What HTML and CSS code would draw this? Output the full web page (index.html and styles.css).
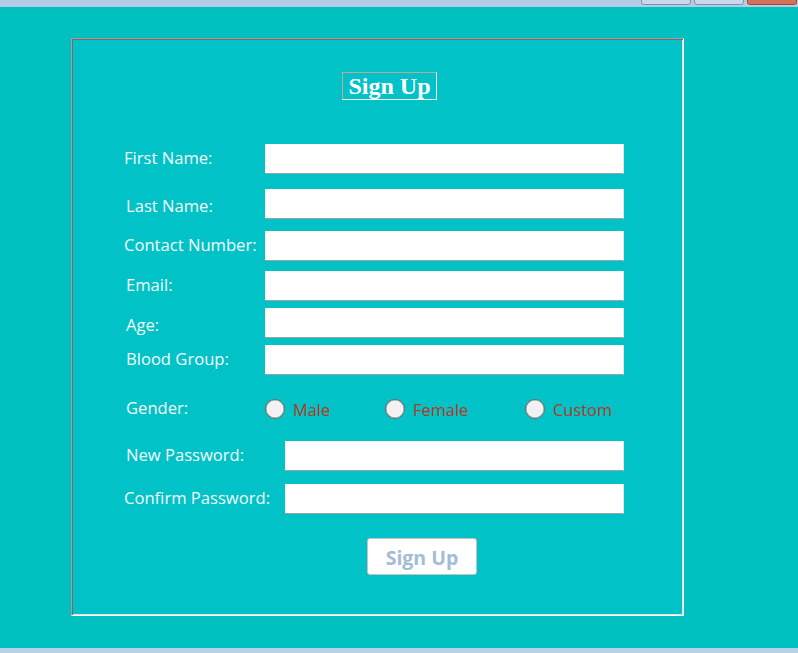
FILE: index.html
```html
<!DOCTYPE html>
<html>
<head>
<meta charset="utf-8">
<title>Sign Up</title>
<link rel="stylesheet" href="styles.css">
</head>
<body>
<div class="titlebar">
  <div class="tb-btn"></div>
  <div class="tb-btn"></div>
  <div class="tb-btn close"></div>
</div>
<main class="client">
  <section class="panel">
    <div class="title">Sign Up</div>
    <div class="row r1"><label class="lbl">First Name:</label><div class="field"></div></div>
    <div class="row r2"><label class="lbl shift l2">Last Name:</label><div class="field"></div></div>
    <div class="row r3"><label class="lbl">Contact Number:</label><div class="field"></div></div>
    <div class="row r4"><label class="lbl l2">Email:</label><div class="field"></div></div>
    <div class="row r5"><label class="lbl shift l2">Age:</label><div class="field"></div></div>
    <div class="row r6"><label class="lbl l2">Blood Group:</label><div class="field"></div></div>
    <div class="row r7">
      <label class="lbl l2">Gender:</label>
      <div class="radios">
        <div class="opt o1"><span class="dot"></span><span class="otext">Male</span></div>
        <div class="opt o2"><span class="dot"></span><span class="otext">Female</span></div>
        <div class="opt"><span class="dot"></span><span class="otext">Custom</span></div>
      </div>
    </div>
    <div class="row r8"><label class="lbl wide l2">New Password:</label><div class="field short"></div></div>
    <div class="row r9"><label class="lbl wide">Confirm Password:</label><div class="field short"></div></div>
    <div class="btnrow"><button class="btn">Sign Up</button></div>
  </section>
</main>
<div class="statusbar"></div>
</body>
</html>
```
FILE: styles.css
```css
html, body {
  margin: 0;
  padding: 0;
}
body {
  width: 798px;
  height: 653px;
  overflow: hidden;
  background: #00c1c0;
  font-family: "Open Sans", "Noto Sans", sans-serif;
}
.titlebar {
  height: 7px;
  background: #b3cbe4;
  display: flex;
  justify-content: flex-end;
  gap: 3px;
  padding-right: 1px;
}
.tb-btn {
  width: 48px;
  height: 4px;
  margin-top: -1px;
  border: 1px solid #8093ad;
  border-radius: 0 0 3px 3px;
  background: #c9d9ec;
}
.tb-btn.close {
  background: #d9705c;
  border-color: #9a4a3c;
}
.client {
  height: 641px;
  background: #00c1c0;
  padding: 31px 0 0 71px;
  box-sizing: border-box;
}
.statusbar {
  height: 5px;
  background: #b8d0e8;
}
.panel {
  width: 613px;
  height: 578px;
  box-sizing: border-box;
  background: #00c2c7;
  border-top: 1px solid #a0a0a0;
  border-left: 1px solid #a0a0a0;
  border-right: 1px solid #ffffff;
  border-bottom: 1px solid #ffffff;
  box-shadow: inset 1px 1px 0 #6e6e6e, inset -1px -1px 0 #e3e3e3;
  padding-top: 33px;
  display: flex;
  flex-direction: column;
}
.title {
  margin-left: 270px;
  width: 95px;
  height: 28px;
  box-sizing: border-box;
  border-top: 1px solid #c9a0a0;
  border-left: 1px solid #c9a0a0;
  border-right: 1px solid #ffffff;
  border-bottom: 1px solid #ffffff;
  color: #ffffff;
  font-family: "Liberation Serif", "Times New Roman", serif;
  font-weight: bold;
  font-size: 24px;
  line-height: 26px;
  text-align: center;
}
.row {
  display: flex;
  align-items: center;
  height: 30px;
  padding-left: 52px;
}
.r1 { margin-top: 44px; }
.r2 { margin-top: 15px; }
.r3 { margin-top: 12px; }
.r4 { margin-top: 10px; }
.r5 { margin-top: 7px; }
.r6 { margin-top: 7px; }
.r7 { margin-top: 19px; }
.r8 { margin-top: 17px; }
.r9 { margin-top: 13px; }
.lbl {
  width: 141px;
  flex: none;
  color: #f6fcfc;
  font-size: 16.6px;
  line-height: 20px;
  white-space: nowrap;
  padding-bottom: 2px;
}
.lbl.l2 {
  padding-left: 2px;
  width: 139px;
}
.lbl.shift {
  padding-top: 4px;
  padding-bottom: 0;
}
.lbl.wide { width: 161px; }
.lbl.wide.l2 { width: 159px; }
.field {
  width: 359px;
  height: 30px;
  box-sizing: border-box;
  background: #ffffff;
  border-right: 1px solid #e3e3e3;
  border-bottom: 1px solid #a0a0a0;
}
.field.short { width: 339px; }
.radios {
  display: flex;
  align-items: center;
}
.opt {
  display: flex;
  align-items: center;
  gap: 8px;
}
.o1 { width: 120px; }
.o2 { width: 140px; }
.dot {
  width: 20px;
  height: 20px;
  box-sizing: border-box;
  border-radius: 50%;
  border: 1px solid #6a6a6a;
  background: #f2f2f2;
  box-shadow: inset 0 0 0 0.5px #9a9a9a;
}
.otext {
  color: #b8391e;
  font-size: 16.4px;
  line-height: 20px;
  padding-top: 2px;
}
.btnrow {
  margin-top: 24px;
  padding-left: 295px;
}
.btn {
  width: 110px;
  height: 37px;
  box-sizing: border-box;
  background: #ffffff;
  border: 1px solid #c8c0c4;
  border-radius: 3px;
  color: #a3bcd6;
  font-family: "Open Sans", "Noto Sans", sans-serif;
  font-weight: bold;
  font-size: 19.5px;
  padding: 0;
  padding-top: 1px;
}
```
